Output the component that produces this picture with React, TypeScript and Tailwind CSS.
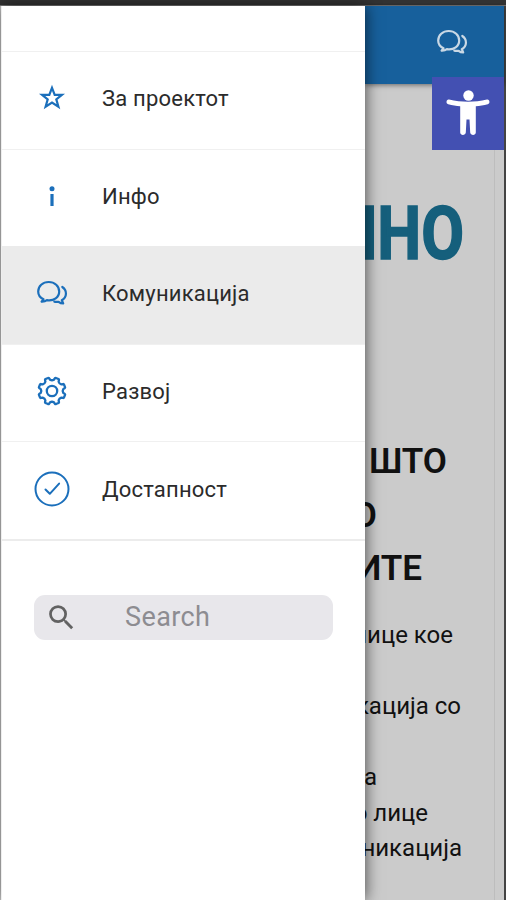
import React from 'react';
import { MdSearch } from 'react-icons/md';

const teeth = Array.from({ length: 8 }, (_, i) => 22.5 + i * 45);

function polar(angle: number, radius: number) {
  const rad = (angle * Math.PI) / 180;
  return `${(16 + radius * Math.cos(rad)).toFixed(2)} ${(16 + radius * Math.sin(rad)).toFixed(2)}`;
}

const gearPath = 'M' + teeth.map(a =>
  `${polar(a - 13, 11.4)}L${polar(a - 9.5, 13.2)}Q${polar(a - 8, 13.8)} ${polar(a - 5, 13.6)}L${polar(a + 5, 13.6)}Q${polar(a + 8, 13.8)} ${polar(a + 9.5, 13.2)}L${polar(a + 13, 11.4)}Q${polar(a + 22.5, 10.2)} `
).join('') + polar(9.5, 11.4) + 'Z';

function StarIcon() {
  return <svg className="w-8 h-8" viewBox="0 0 32 32" fill="none" stroke="currentColor" strokeWidth="2.2">
      <path d="M16 5.8l2.7 7h7.2l-5.6 4.5 2.1 7.4-6.4-4.2-6.4 4.2 2.1-7.4-5.6-4.5h7.2z" />
    </svg>;
}

function InfoIcon() {
  return <svg className="w-8 h-8" viewBox="0 0 32 32" fill="currentColor">
      <circle cx="16" cy="8.8" r="2.5" />
      <path d="M14.4 14h3.2v12h-3.2z" />
    </svg>;
}

function ChatIcon() {
  return <svg className="w-8 h-8" viewBox="0 0 32 32" fill="none" stroke="currentColor" strokeWidth="2.2" strokeLinejoin="round" strokeLinecap="round">
      <path d="M7.5 22.2L5.6 24.6C8 24.7 9.6 24.2 10.9 23.1C18 24.3 23.2 20 23.2 14.5C23.2 9.2 18.7 5 12.7 5S2.2 9.2 2.2 14.5C2.2 17.8 4.2 20.7 7.5 22.2z" />
      <path d="M26.3 10C31.3 13.5 31.2 19.9 25.8 23.2L27.2 26.4C25.2 26.4 23.7 25.7 22.6 24.8C21 25.1 19.6 25 18.3 24.6" />
    </svg>;
}

function GearIcon() {
  return <svg className="w-8 h-8" viewBox="0 0 32 32" fill="none" stroke="currentColor" strokeWidth="2.3" strokeLinejoin="round">
      <path d={gearPath} />
      <circle cx="16" cy="16" r="5.2" />
    </svg>;
}

function CheckIcon() {
  return <svg className="w-9 h-9" viewBox="0 0 36 36" fill="none" stroke="currentColor" strokeWidth="2" strokeLinecap="round" strokeLinejoin="round">
      <circle cx="18" cy="18" r="16.5" />
      <path d="M11.5 18.5l4.3 4.3 9.3-10.2" />
    </svg>;
}

function PersonIcon() {
  return <svg className="w-[46px] h-[50px]" viewBox="0 0 46 50" fill="white">
      <circle cx="23.5" cy="6.5" r="5.2" />
      <path d="M4 10.5c6.500 1.700 12.500 2.200 19 2.200s12.500-.5 19-2.200c2.700-.6 3.500 4 .8 4.700-4.200 1.100-8 1.700-12 2.100v26.200c0 3.200-5.400 3.200-5.600 0l-.7-13h-3l-.7 13c-.2 3.200-5.600 3.200-5.600 0V17.300c-4-.4-7.800-1-12-2.100-2.700-.7-1.900-5.300.8-4.700z" />
    </svg>;
}

const menuItems = [
  { label: 'За проектот', icon: <StarIcon /> },
  { label: 'Инфо', icon: <InfoIcon /> },
  { label: 'Комуникација', icon: <ChatIcon />, active: true },
  { label: 'Развој', icon: <GearIcon /> },
  { label: 'Достапност', icon: <CheckIcon /> }
];

function Drawer() {
  return <aside className="relative z-10 w-[364px] shrink-0 bg-white border-l border-[#eeeeee] shadow-[1px_0_14px_rgba(0,0,0,0.6)]">
      <nav className="pt-[45px]">
        {menuItems.map(item => <div key={item.label} className={`flex items-center h-[97.6px] border-t text-[22px] tracking-[0.2px] text-[#2b2b2b] ${item.active ? 'bg-[#ebebeb] border-[#ebebeb]' : 'border-[#f0f0f0]'}`}>
            <span className="w-[100px] -mt-1 flex justify-center text-[#1b6fbb]">{item.icon}</span>
            <span className="-mt-[3px]">{item.label}</span>
          </div>)}
      </nav>
      <div className="border-t-2 border-[#ececec] pt-[54px] pl-[32px]">
        <label className="flex items-center w-[299px] h-[45px] rounded-[11px] bg-[#e8e7eb] pl-[11px] gap-[47px]">
          <MdSearch className="w-[33px] h-[33px] text-[#626262]" />
          <span className="text-[27px] tracking-[0.4px] text-[#8d8c91]">Search</span>
        </label>
      </div>
    </aside>;
}

function Article() {
  return <div className="flex-1 mr-[9px] border-r border-[#bdbdbd] overflow-hidden flex flex-col whitespace-nowrap text-[#111111]">
      <h1 className="flex justify-end pr-[30px] mt-[105px] h-[90px] leading-[90px] text-[74px] font-bold text-[#155f7c]">
        <span className="origin-right scale-x-[0.84] [-webkit-text-stroke:1.6px_#155f7c]">ИНО</span>
      </h1>
      <h2 className="mt-[156px] text-[35px] leading-[53.5px] font-semibold">
        <span className="flex justify-end pr-[47px]">ШТО</span>
        <span className="flex justify-end pr-[117px]">О</span>
        <span className="flex justify-end pr-[72px]">ИТЕ</span>
      </h2>
      <div className="mt-[22px] text-[24px] leading-[35.6px]">
        <p className="flex justify-end pr-[41px] h-[71.2px]">лице кое</p>
        <p className="flex justify-end pr-[33px] h-[71.6px]">кација со</p>
        <p className="flex justify-end pr-[117px]">а</p>
        <p className="flex justify-end pr-[66px]">о лице</p>
        <p className="flex justify-end pr-[32px]">никација</p>
      </div>
    </div>;
}

export default function App() {
  return <div className="w-[506px] h-[900px] flex flex-col overflow-hidden bg-[#c8c8c8] font-[Roboto,sans-serif]">
      <div className="h-[6px] shrink-0 bg-[#333333] border-b border-[#777777]" />
      <div className="flex flex-1 min-h-0 pl-px border-r-2 border-[#444444]">
        <Drawer />
        <main className="relative flex-1 min-w-0 flex flex-col bg-[#cbcbcb]">
          <header className="h-[78px] shrink-0 bg-[#17609c] shadow-[0_1px_5px_rgba(0,0,0,0.5)] flex justify-end pr-[36px] pt-[20px] text-[#c9d8e5]">
            <ChatIcon />
          </header>
          <Article />
          <button className="absolute right-0 top-[71px] w-[72px] h-[73px] bg-[#4350b2] flex items-center justify-center">
            <PersonIcon />
          </button>
        </main>
      </div>
    </div>;
}
